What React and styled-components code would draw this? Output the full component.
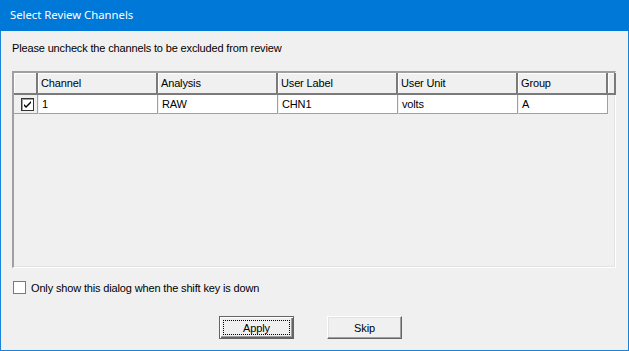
import React from "react";
import styled, { createGlobalStyle } from "styled-components";

const Global = createGlobalStyle`
  html, body { margin: 0; padding: 0; background: #f0f0f0; }
  * { box-sizing: border-box; }
`;

const Window = styled.div`
  width: 629px;
  height: 351px;
  border: 1px solid #1a82d8;
  border-top: none;
  background: #f0f0f0;
  display: flex;
  flex-direction: column;
  font-family: "Liberation Sans", Arial, sans-serif;
  font-size: 11px;
  letter-spacing: -0.15px;
  color: #000;
`;

const TitleBar = styled.div`
  height: 31px;
  margin: 0 -1px;
  background: #0078d7;
  color: #fff;
  font-family: "Noto Sans", "Open Sans", sans-serif;
  font-size: 11.3px;
  letter-spacing: 0;
  display: flex;
  align-items: center;
  padding-left: 10px;
  padding-bottom: 2px;
`;

const Body = styled.div`
  flex: 1;
  display: flex;
  flex-direction: column;
  padding-left: 11px;
`;

const Prompt = styled.div`
  margin-top: 11px;
  height: 13px;
  line-height: 13px;
`;

const GridBox = styled.div`
  margin-top: 16px;
  width: 604px;
  height: 197px;
  border-top: 2px solid #a0a0a0;
  border-left: 2px solid #a0a0a0;
  border-right: 1px solid #fff;
  border-bottom: 1px solid #fff;
  box-shadow: inset -1px -1px 0 #e3e3e3;
  background: #f0f0f0;
  display: grid;
  grid-template-columns: 24px 120px 120px 120px 120px 90px 8px;
  grid-template-rows: 22px 19px;
  align-content: start;
`;

const HeadCell = styled.div`
  background: #f0f0f0;
  border-right: 2px solid #7a7a7a;
  border-bottom: 2px solid #7a7a7a;
  box-shadow: inset 1px 1px 0 #fff;
  padding-left: 3px;
  display: flex;
  align-items: center;
  white-space: nowrap;
  overflow: hidden;
`;

const DataCell = styled.div`
  background: ${(p) => (p.$fixed ? "#f0f0f0" : "#fff")};
  border-right: 1px solid #a0a0a0;
  border-bottom: 1px solid #a0a0a0;
  border-left: ${(p) => (p.$fixed ? "0" : "1px solid #f0f0f0")};
  padding-left: 3px;
  display: flex;
  align-items: center;
  justify-content: ${(p) => (p.$fixed ? "center" : "flex-start")};
  white-space: nowrap;
`;

const Empty = styled.div``;

const Check = styled.span`
  width: 13px;
  height: 13px;
  background: #fff;
  border: 1px solid ${(p) => (p.$dark ? "#333" : "#7a7a7a")};
  box-shadow: ${(p) => (p.$dark ? "inset 1px 1px 0 #a0a0a0" : "none")};
  display: inline-flex;
  align-items: center;
  justify-content: center;
  flex: none;
`;

const OptionRow = styled.label`
  margin-top: 13px;
  margin-left: 1px;
  height: 13px;
  display: flex;
  align-items: center;
  gap: 5px;
`;

const Buttons = styled.div`
  margin-top: 22px;
  padding-left: 207px;
  display: flex;
  gap: 33px;
`;

const Button = styled.button`
  width: 75px;
  height: 23px;
  font-family: "Liberation Sans", Arial, sans-serif;
  font-size: 11px;
  letter-spacing: -0.15px;
  color: #000;
  background: #f0f0f0;
  padding: 0;
  border: 1px solid;
  border-color: ${(p) => (p.$default ? "#646464" : "#fff #646464 #646464 #fff")};
  box-shadow: ${(p) =>
    p.$default
      ? "inset 1px 1px 0 #fff, inset -1px -1px 0 #646464, inset -2px -2px 0 #a0a0a0"
      : "inset -1px -1px 0 #a0a0a0, inset 1px 1px 0 #e3e3e3"};
  position: relative;
`;

const Focus = styled.span`
  position: absolute;
  left: 3px;
  top: 3px;
  right: 3px;
  bottom: 3px;
  border: 1px dotted #000;
  display: flex;
  align-items: center;
  justify-content: center;
`;

const Tick = () => (
  <svg width="9" height="9" viewBox="0 0 9 9">
    <path d="M1 4 L3 6 L8 1 L8 3 L3 8 L1 6 Z" fill="#000" />
  </svg>
);

const headers = ["Channel", "Analysis", "User Label", "User Unit", "Group"];
const row = ["1", "RAW", "CHN1", "volts", "A"];

export default function App() {
  return (
    <>
      <Global />
      <Window>
        <TitleBar>Select Review Channels</TitleBar>
        <Body>
          <Prompt>Please uncheck the channels to be excluded from review</Prompt>
          <GridBox>
            <HeadCell />
            {headers.map((h) => (
              <HeadCell key={h}>{h}</HeadCell>
            ))}
            <HeadCell />
            <DataCell $fixed>
              <Check $dark>
                <Tick />
              </Check>
            </DataCell>
            {row.map((v, i) => (
              <DataCell key={i}>{v}</DataCell>
            ))}
            <Empty />
          </GridBox>
          <OptionRow>
            <Check />
            Only show this dialog when the shift key is down
          </OptionRow>
          <Buttons>
            <Button $default>
              <Focus>Apply</Focus>
            </Button>
            <Button>Skip</Button>
          </Buttons>
        </Body>
      </Window>
    </>
  );
}
